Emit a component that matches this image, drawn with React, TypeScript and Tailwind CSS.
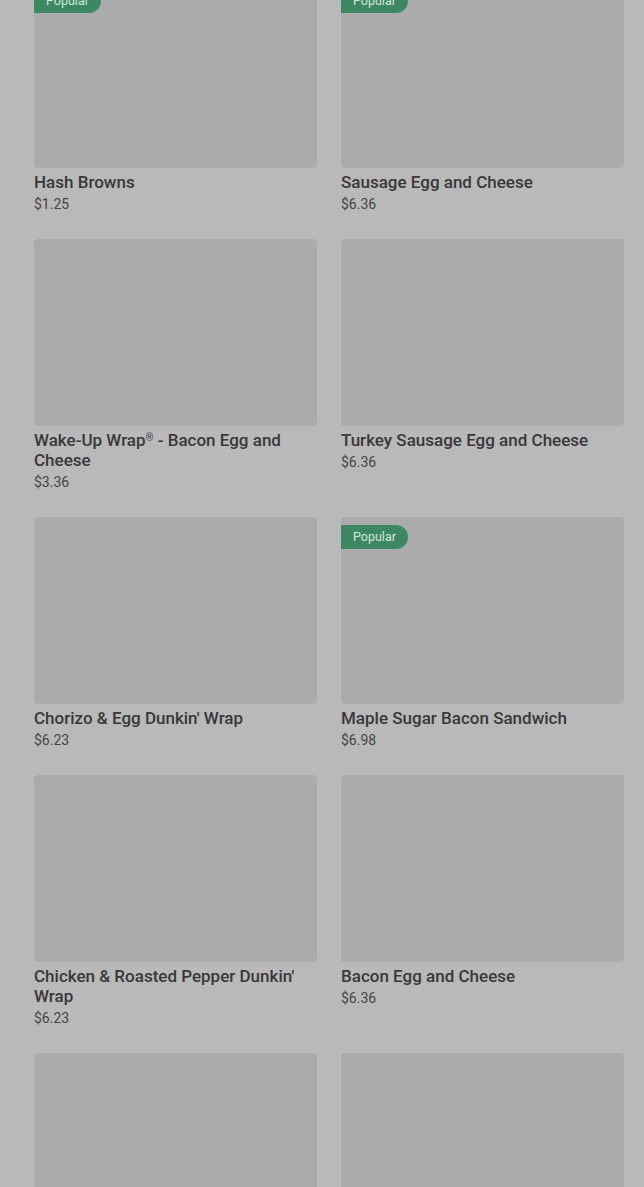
const items = [
  { name: 'Hash Browns', price: '$1.25', popular: true },
  { name: 'Sausage Egg and Cheese', price: '$6.36', popular: true },
  { name: 'Wake-Up Wrap® - Bacon Egg and Cheese', price: '$3.36', popular: false },
  { name: 'Turkey Sausage Egg and Cheese', price: '$6.36', popular: false },
  { name: "Chorizo & Egg Dunkin' Wrap", price: '$6.23', popular: false },
  { name: 'Maple Sugar Bacon Sandwich', price: '$6.98', popular: true },
  { name: "Chicken & Roasted Pepper Dunkin' Wrap", price: '$6.23', popular: false },
  { name: 'Bacon Egg and Cheese', price: '$6.36', popular: false },
  { name: 'Egg and Cheese', price: '$5.19', popular: false },
  { name: 'Sausage, Egg & Cheese Wrap', price: '$4.29', popular: false },
];

// the registered mark sits small and raised in the menu titles
function Title({ text }: { text: string }) {
  const parts = text.split('®');
  return (
    <>
      {parts.map((part, i) => (
        <span key={i}>
          {part}
          {i < parts.length - 1 && <span className="relative -top-[5px] text-[10px] leading-none">®</span>}
        </span>
      ))}
    </>
  );
}

export default function App() {
  return (
    <div className="h-[1187px] overflow-hidden bg-[#b9b9b9] font-['Roboto','Liberation_Sans',sans-serif]">
      <div className="-mt-[19px] grid grid-cols-2 gap-x-6 gap-y-6 pl-[34px] pr-5">
        {items.map((item) => (
          <div key={item.name} className="flex flex-col">
            <div className="relative h-[187px] rounded-sm bg-[#ababab]">
              {item.popular && (
                <span className="absolute left-0 top-2 flex h-6 items-center rounded-r-full bg-[#3b8862] pl-3 pr-3 text-[12.5px] text-[#d3e6da]">
                  Popular
                </span>
              )}
            </div>
            <p className="mt-1 text-[17px] font-medium leading-5 text-[#383838]">
              <Title text={item.name} />
            </p>
            <p className="mt-px text-[14px] leading-[22px] text-[#454545]">{item.price}</p>
          </div>
        ))}
      </div>
    </div>
  );
}
